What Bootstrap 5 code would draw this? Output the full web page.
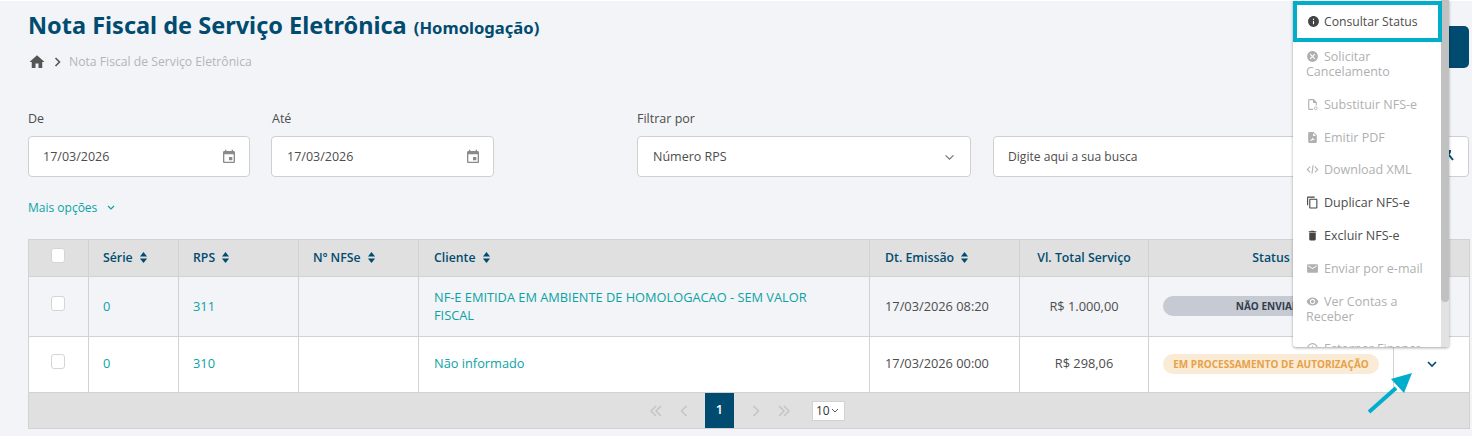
<!DOCTYPE html>
<html lang="pt-BR">
<head>
    <meta charset="UTF-8">
    <title>Nota Fiscal de Serviço Eletrônica</title>
    <link href="https://cdn.jsdelivr.net/npm/bootstrap@5.3.2/dist/css/bootstrap.min.css" rel="stylesheet">
    <style>
        html, body { height: 436px; overflow: hidden; }
        body { background: #f2f4f8; font-family: "Open Sans", "Noto Sans", sans-serif; font-size: 12.8px; color: #4d4d4d; position: relative; }
        .page-wrap { padding: 8px 3px 0 28px; border-top: 1px solid #fff; }
        .page-title { font-family: "Noto Sans", sans-serif; font-size: 23.5px; font-weight: 700; color: #004b6f; margin: 0; line-height: 32px; }
        .page-title span { font-size: 16.6px; margin-left: 1px; }
        .crumbs { margin-top: 9px; height: 18px; color: #b5b5b5; gap: 7px; font-size: 12.2px; }
        .crumbs svg { fill: #555; }
        .filters { margin-top: 39px; }
        .fld { flex: none; }
        .fld label { display: block; height: 20px; line-height: 18px; margin-bottom: 6px; font-size: 12.5px; color: #4d4d4d; }
        .fld-box { height: 41px; background: #fff; border: 1px solid #cfcfcf; border-radius: 4px; padding: 1px 14px 0; color: #4d4d4d; font-size: 12.5px; }
        .fld-box svg { fill: #8a8a8a; }
        .w-date { width: 222px; margin-right: 21px; }
        .w-date .fld-box svg { margin-right: -2px; }
        .w-date + .w-date { width: 223px; }
        .w-date + .w-date label { padding-left: 1px; }
        .w-date + .w-date .fld-box { padding-left: 15px; }
        .w-select { width: 334px; margin-left: 122px; margin-right: 22px; }
        .w-select .fld-box { padding: 1px 15px 0 15px; }
        .w-search { width: 476px; }
        .w-search .fld-box { font-size: 12.1px; }
        .more-opts { margin-top: 22px; height: 18px; color: #0aa3a3; gap: 10px; font-size: 12px; }
        .grid-table { margin-top: 22px; width: 1441px; table-layout: fixed; border-collapse: collapse; border: 1px solid #d2d2d2; }
        .grid-table th, .grid-table td { border: 1px solid #d2d2d2; vertical-align: middle; padding: 0 15px; font-size: 12.8px; }
        .grid-table th:nth-child(-n+4), .grid-table td:nth-child(-n+4), .grid-table td:nth-child(8) { padding-left: 14px; }
        .grid-table th { background: #e0e0e0; color: #004b6f; height: 37px; font-size: 12.3px; font-weight: 600; white-space: nowrap; }
        .grid-table td a { color: #0aa3a3; text-decoration: none; }
        .row-a td { background: #f2f4f8; height: 60px; line-height: 18px; padding-bottom: 2px; }
        .row-b td { background: #fff; height: 56px; padding-bottom: 1px; }
        .grid-table td.foot-cell { background: #e0e0e0; height: 35px; padding: 0; }
        .chk { display: block; width: 14px; height: 15px; margin: 0 auto 5px; background: #fff; border: 1px solid #d5d5d5; border-radius: 3px; }
        .sort-arrows { display: inline-block; margin-left: 6px; vertical-align: -1px; fill: #004b6f; }
        .pill { display: block; width: 216px; height: 20px; line-height: 20px; border-radius: 10px; font-size: 10px; font-weight: 700; white-space: nowrap; text-align: center; }
        .pill-grey { background: #c6cad3; color: #333d4d; }
        .pill-orange { background: #faebd7; color: #e8a146; }
        .pager { height: 35px; color: #bdbdbd; padding-right: 4px; }
        .pager-cur { width: 29px; height: 35px; background: #004b6f; color: #fff; text-align: center; line-height: 33px; font-weight: 600; margin: 0 18px 0 17px; }
        .pager svg { stroke: #c4c4c4; fill: none; stroke-width: 1.5; }
        .pager-gap { margin-left: 17px; }
        .size-select { width: 33px; height: 20px; background: #fff; border: 1px solid #d2d2d2; margin-left: 21px; font-size: 12px; color: #333; padding-left: 3px; gap: 1px; }
        .side-btn { position: absolute; left: 1420px; top: 26px; width: 49px; height: 42px; background: #004b6f; border-radius: 5px; }
        .search-icon { position: absolute; left: 1444px; top: 150px; fill: none; stroke: #004b6f; stroke-width: 2; }
        .action-menu { position: absolute; left: 1293px; top: 0; width: 156px; height: 347px; background: #fff; border-radius: 0 0 3px 3px; box-shadow: 0 1px 3px rgba(0, 0, 0, .35); overflow: hidden; font-size: 12.5px; }
        .menu-track { position: absolute; right: 0; top: 0; width: 8px; height: 100%; background: #e2e2e2; }
        .menu-thumb { position: absolute; right: 0; top: 0; width: 8px; height: 302px; background: #c1c1c1; border-radius: 0 0 4px 4px; }
        .menu-entry { padding: 0 10px 0 13px; line-height: 15px; color: #b0b0b0; }
        .menu-entry svg { fill: #b0b0b0; margin-right: 5px; vertical-align: -2px; }
        .menu-entry.on { color: #4d4d4d; }
        .menu-entry.on svg { fill: #444; }
        .entry-focus { position: absolute; left: 0; top: 1px; width: 149px; height: 41px; border: 4px solid #00aecb; background: #fff; color: #4d4d4d; padding: 0 0 0 10px; line-height: 33px; white-space: nowrap; font-size: 12.2px; }
        .entry-focus svg { fill: #444; margin-right: 4px; vertical-align: -2px; }
        .menu-list { padding-top: 49px; }
        .menu-list .menu-entry { margin-bottom: 17.8px; }
        .callout { position: absolute; left: 1364px; top: 372px; }
    </style>
</head>
<body>
    <svg width="0" height="0" class="position-absolute">
        <symbol id="i-info" viewBox="0 0 24 24"><path d="M12 2C6.480 2 2 6.480 2 12s4.480 10 10 10 10-4.480 10-10S17.520 2 12 2zm1 15h-2v-6h2v6zm0-8h-2V7h2v2z"/></symbol>
        <symbol id="i-cancel" viewBox="0 0 24 24"><path d="M12 2C6.470 2 2 6.470 2 12s4.470 10 10 10 10-4.470 10-10S17.530 2 12 2zm5 13.590L15.590 17 12 13.410 8.410 17 7 15.590 10.590 12 7 8.410 8.410 7 12 10.590 15.590 7 17 8.410 13.410 12 17 15.590z"/></symbol>
        <symbol id="i-file" viewBox="0 0 24 24"><path d="M14 2H6c-1.100 0-2 .9-2 2v16c0 1.100.9 2 2 2h7v-2H6V4h7v5h5v5h2V8l-6-6z"/><circle cx="18" cy="19" r="2.600" fill="none" stroke="#b0b0b0" stroke-width="1.600"/></symbol>
        <symbol id="i-pdf" viewBox="0 0 24 24"><path d="M14 2H6c-1.100 0-2 .9-2 2v16c0 1.100.9 2 2 2h12c1.100 0 2-.9 2-2V8l-6-6zm-1 7V3.500L18.500 9H13zM7 19c1-2 3-3.500 5-5l-1-3c2 3 3 4 6 5-3 0-5 .5-10 3z"/></symbol>
        <symbol id="i-code" viewBox="0 0 24 24"><path d="M8.400 16.600L3.800 12l4.600-4.600L7 6l-6 6 6 6 1.400-1.400zm7.200 0l4.600-4.600-4.600-4.600L17 6l6 6-6 6-1.400-1.400zM14 4h-2l-2 16h2z"/></symbol>
        <symbol id="i-copy" viewBox="0 0 24 24"><path d="M16 1H4c-1.100 0-2 .9-2 2v14h2V3h12V1zm3 4H8c-1.100 0-2 .9-2 2v14c0 1.100.9 2 2 2h11c1.100 0 2-.9 2-2V7c0-1.100-.9-2-2-2zm0 16H8V7h11v14z"/></symbol>
        <symbol id="i-trash" viewBox="0 0 24 24"><path d="M6 19c0 1.100.9 2 2 2h8c1.100 0 2-.9 2-2V7H6v12zM19 4h-3.500l-1-1h-5l-1 1H5v2h14V4z"/></symbol>
        <symbol id="i-mail" viewBox="0 0 24 24"><path d="M20 4H4c-1.100 0-1.990.9-1.990 2L2 18c0 1.100.9 2 2 2h16c1.100 0 2-.9 2-2V6c0-1.100-.9-2-2-2zm0 4l-8 5-8-5V6l8 5 8-5v2z"/></symbol>
        <symbol id="i-eye" viewBox="0 0 24 24"><path d="M12 4.500C7 4.500 2.730 7.610 1 12c1.730 4.390 6 7.500 11 7.500s9.270-3.110 11-7.500c-1.730-4.390-6-7.500-11-7.500zM12 17c-2.760 0-5-2.240-5-5s2.240-5 5-5 5 2.240 5 5-2.240 5-5 5zm0-8c-1.660 0-3 1.340-3 3s1.340 3 3 3 3-1.340 3-3-1.340-3-3-3z"/></symbol>
        <symbol id="i-clock" viewBox="0 0 24 24"><path d="M12 2a10 10 0 1 0 0 20 10 10 0 0 0 0-20zm0 18a8 8 0 1 1 0-16 8 8 0 0 1 0 16zm.5-13H11v6l5 3 .8-1.200-4.300-2.600z"/></symbol>
        <symbol id="i-event" viewBox="0 0 24 24"><path d="M17 12h-5v5h5v-5zM16 1v2H8V1H6v2H5c-1.110 0-1.990.9-1.990 2L3 19c0 1.100.89 2 2 2h14c1.100 0 2-.9 2-2V5c0-1.100-.9-2-2-2h-1V1h-2zm3 18H5V8h14v11z"/></symbol>
        <symbol id="i-sort" viewBox="0 0 10 12"><path d="M5 0l4 5H1zM5 12L1 7h8z"/></symbol>
    </svg>

    <div class="page-wrap">
        <h1 class="page-title">Nota Fiscal de Serviço Eletrônica <span>(Homologação)</span></h1>
        <div class="crumbs d-flex align-items-center">
            <svg width="18" height="18" viewBox="0 0 24 24"><path d="M10 20v-6h4v6h5v-8h3L12 3 2 12h3v8z"/></svg>
            <svg width="9" height="10" viewBox="0 0 9 10" style="fill:none;stroke:#555;stroke-width:1.600"><path d="M2.500 1l4 4-4 4"/></svg>
            <span>Nota Fiscal de Serviço Eletrônica</span>
        </div>

        <div class="filters d-flex">
            <div class="fld w-date">
                <label>De</label>
                <div class="fld-box d-flex align-items-center justify-content-between">17/03/2026 <svg width="16" height="16"><use href="#i-event"/></svg></div>
            </div>
            <div class="fld w-date">
                <label>Até</label>
                <div class="fld-box d-flex align-items-center justify-content-between">17/03/2026 <svg width="16" height="16"><use href="#i-event"/></svg></div>
            </div>
            <div class="fld w-select">
                <label>Filtrar por</label>
                <div class="fld-box d-flex align-items-center justify-content-between">Número RPS
                    <svg width="11" height="7" viewBox="0 0 12 8" style="fill:none;stroke:#777;stroke-width:1.400"><path d="M1.500 1.500L6 6l4.500-4.500"/></svg>
                </div>
            </div>
            <div class="fld w-search">
                <label>&nbsp;</label>
                <div class="fld-box d-flex align-items-center">Digite aqui a sua busca</div>
            </div>
        </div>

        <div class="more-opts d-flex align-items-center">
            <span>Mais opções</span>
            <svg width="8" height="6" viewBox="0 0 8 6" style="fill:none;stroke:#0aa3a3;stroke-width:1.200"><path d="M1 1l3 3 3-3"/></svg>
        </div>

        <table class="grid-table">
            <colgroup>
                <col style="width:60px"><col style="width:90px"><col style="width:120px"><col style="width:120px">
                <col style="width:451px"><col style="width:150px"><col style="width:129px"><col style="width:245px"><col style="width:76px">
            </colgroup>
            <thead>
                <tr>
                    <th><span class="chk"></span></th>
                    <th>Série<svg class="sort-arrows" width="9" height="11"><use href="#i-sort"/></svg></th>
                    <th>RPS<svg class="sort-arrows" width="9" height="11"><use href="#i-sort"/></svg></th>
                    <th>Nº NFSe<svg class="sort-arrows" width="9" height="11"><use href="#i-sort"/></svg></th>
                    <th>Cliente<svg class="sort-arrows" width="9" height="11"><use href="#i-sort"/></svg></th>
                    <th>Dt. Emissão<svg class="sort-arrows" width="9" height="11"><use href="#i-sort"/></svg></th>
                    <th class="text-center">Vl. Total Serviço</th>
                    <th class="text-center">Status</th>
                    <th></th>
                </tr>
            </thead>
            <tbody>
                <tr class="row-a">
                    <td><span class="chk"></span></td>
                    <td><a href="#">0</a></td>
                    <td><a href="#">311</a></td>
                    <td></td>
                    <td><a href="#">NF-E EMITIDA EM AMBIENTE DE HOMOLOGACAO - SEM VALOR<br>FISCAL</a></td>
                    <td>17/03/2026 08:20</td>
                    <td class="text-center">R$ 1.000,00</td>
                    <td><span class="pill pill-grey">NÃO ENVIADA</span></td>
                    <td></td>
                </tr>
                <tr class="row-b">
                    <td><span class="chk"></span></td>
                    <td><a href="#">0</a></td>
                    <td><a href="#">310</a></td>
                    <td></td>
                    <td><a href="#">Não informado</a></td>
                    <td>17/03/2026 00:00</td>
                    <td class="text-center">R$ 298,06</td>
                    <td><span class="pill pill-orange">EM PROCESSAMENTO DE AUTORIZAÇÃO</span></td>
                    <td class="text-center"><svg width="10" height="7" viewBox="0 0 10 7" style="fill:none;stroke:#004b6f;stroke-width:1.600"><path d="M1 1l4 4 4-4"/></svg></td>
                </tr>
                <tr>
                    <td colspan="9" class="foot-cell">
                        <div class="pager d-flex justify-content-center align-items-center">
                            <svg width="14" height="12" viewBox="0 0 14 12"><path d="M7 1L2 6l5 5M12 1L7 6l5 5"/></svg>
                            <svg class="pager-gap" width="8" height="12" viewBox="0 0 8 12"><path d="M6.500 1l-5 5 5 5"/></svg>
                            <span class="pager-cur">1</span>
                            <svg width="8" height="12" viewBox="0 0 8 12"><path d="M1.500 1l5 5-5 5"/></svg>
                            <svg class="pager-gap" width="14" height="12" viewBox="0 0 14 12"><path d="M2 1l5 5-5 5M7 1l5 5-5 5"/></svg>
                            <span class="size-select d-flex align-items-center">10
                                <svg width="8" height="6" viewBox="0 0 8 6" style="stroke:#555;stroke-width:1"><path d="M1 1l3 3 3-3"/></svg>
                            </span>
                        </div>
                    </td>
                </tr>
            </tbody>
        </table>
    </div>

    <div class="side-btn"></div>
    <svg class="search-icon" width="12" height="12" viewBox="0 0 12 12"><circle cx="1" cy="1" r="5"/><path d="M5 5l4 5"/></svg>

    <div class="action-menu">
        <div class="menu-track"></div>
        <div class="menu-thumb"></div>
        <div class="menu-list">
            <div class="menu-entry"><svg width="13" height="13"><use href="#i-cancel"/></svg>Solicitar Cancelamento</div>
            <div class="menu-entry"><svg width="13" height="13"><use href="#i-file"/></svg>Substituir NFS-e</div>
            <div class="menu-entry"><svg width="13" height="13"><use href="#i-pdf"/></svg>Emitir PDF</div>
            <div class="menu-entry"><svg width="13" height="13"><use href="#i-code"/></svg>Download XML</div>
            <div class="menu-entry on"><svg width="13" height="13"><use href="#i-copy"/></svg>Duplicar NFS-e</div>
            <div class="menu-entry on"><svg width="13" height="13"><use href="#i-trash"/></svg>Excluir NFS-e</div>
            <div class="menu-entry"><svg width="13" height="13"><use href="#i-mail"/></svg>Enviar por e-mail</div>
            <div class="menu-entry"><svg width="13" height="13"><use href="#i-eye"/></svg>Ver Contas a Receber</div>
            <div class="menu-entry"><svg width="13" height="13"><use href="#i-clock"/></svg>Estornar Finance</div>
        </div>
        <div class="entry-focus"><svg width="13" height="13"><use href="#i-info"/></svg>Consultar Status</div>
    </div>

    <svg class="callout" width="50" height="44" viewBox="0 0 50 44">
        <path d="M5 40L32 16" stroke="#00aecb" stroke-width="4" fill="none"/>
        <path d="M48 1L27 7l13 14z" fill="#00aecb"/>
    </svg>
</body>
</html>
